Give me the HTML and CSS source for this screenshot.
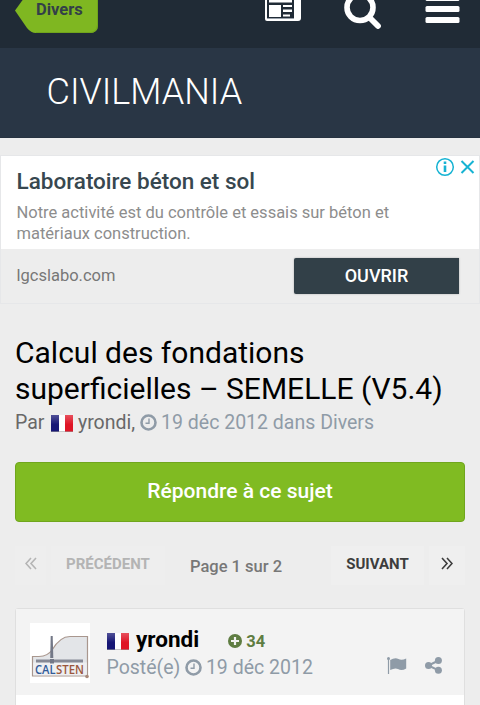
FILE: index.html
```html
<!DOCTYPE html>
<html lang="fr">

<head>
  <meta charset="UTF-8" />
  <meta name="viewport" content="width=device-width, initial-scale=1.0" />
  <title>Calcul des fondations superficielles – SEMELLE (V5.4)</title>
  <link rel="stylesheet" href="styles.css">
</head>

<body>
  <div class="topbar">
    <a class="back">
      <svg class="back-shape" width="83" height="50" viewBox="0 0 83 50">
        <path d="M0 27.500L17 4Q20 0 25 0H75Q83 0 83 8V42Q83 50 75 50H21Q16 50 12 45Z" fill="#7fb721" />
        <path d="M82.500 8V42Q82 49.500 75 49.500H21" fill="none" stroke="#71a51c" />
      </svg>
      <span>Divers</span>
    </a>
    <div class="topbar-icons">
      <svg width="36" height="38" viewBox="0 0 36 38">
        <path d="M2 4H34Q36 4 36 6V35Q36 38 33 38H2Q0 38 0 36V6Q0 4 2 4Z" fill="#fff" />
        <path d="M2 7H29V36H2Z" fill="#202b36" />
        <path d="M4 9H27V19.500H4ZM4 22H16V34H4ZM18 22H27V24H18ZM18 26.500H27V29H18ZM18 31.500H25V33.500H18Z" fill="#fff" />
        <path d="M2 35.500H29" stroke="#99a1ab" />
      </svg>
      <svg width="38" height="46" viewBox="0 0 38 46">
        <circle cx="16" cy="24.500" r="13" fill="none" stroke="#fff" stroke-width="5.600" />
        <path d="M25.500 34.500L34 43" stroke="#fff" stroke-width="5.800" stroke-linecap="round" />
      </svg>
      <svg width="35" height="40" viewBox="0 0 35 40">
        <rect x="0.500" y="12" width="34" height="6" rx="1.500" fill="#fff" />
        <rect x="0.500" y="23" width="34" height="6" rx="1.500" fill="#fff" />
        <rect x="0.500" y="34" width="34" height="6" rx="1.500" fill="#fff" />
      </svg>
    </div>
  </div>

  <div class="brand">CIVILMANIA</div>

  <div class="ad">
    <div class="ad-text">
      <h2>Laboratoire béton et sol</h2>
      <p>Notre activité est du contrôle et essais sur béton et matériaux construction.</p>
      <svg class="ad-choices" width="42" height="20" viewBox="0 0 42 20">
        <g fill="none" stroke="#16b3d3" stroke-width="1.500">
          <circle cx="10" cy="10" r="8.300" />
          <path d="M26.500 4L38.500 16M38.500 4L26.500 16" stroke-width="2" />
        </g>
        <path d="M8.700 4.500H11.300V7H8.700ZM8.700 8.500H11.300V15H8.700Z" fill="#16b3d3" />
      </svg>
    </div>
    <div class="ad-footer">
      <span>lgcslabo.com</span>
      <a class="ad-button">OUVRIR</a>
    </div>
  </div>

  <div class="content">
    <h1>Calcul des fondations superficielles – SEMELLE (V5.4)</h1>
    <div class="meta">
      <span>Par</span>
      <i class="flag"></i>
      <span class="author">yrondi,</span>
      <svg class="clock" width="17" height="17" viewBox="0 0 17 17">
        <circle cx="8.500" cy="8.500" r="7" fill="none" stroke="#8f9ba7" stroke-width="2.600" />
        <path d="M9 4.500V9.300H5.500" fill="none" stroke="#8f9ba7" stroke-width="1.400" />
      </svg>
      <span class="date">19 déc 2012 dans Divers</span>
    </div>

    <a class="reply">Répondre à ce sujet</a>

    <div class="pagination">
      <a class="page first disabled">
        <svg width="12" height="13" viewBox="0 0 12 13"><path d="M6 1L1 6.500L6 12M11 1L6 6.500L11 12" /></svg>
      </a>
      <a class="page previous disabled">PRÉCÉDENT</a>
      <span class="page-count">Page 1 sur 2</span>
      <a class="page next">SUIVANT</a>
      <a class="page last">
        <svg width="12" height="13" viewBox="0 0 12 13"><path d="M1 1L6 6.500L1 12M6 1L11 6.500L6 12" /></svg>
      </a>
    </div>

    <div class="post">
      <div class="post-header">
        <svg class="avatar" width="60" height="60" viewBox="0 0 60 60">
          <rect width="60" height="60" fill="#fff" />
          <path d="M2.500 53V33.500H9Q18 33 22 27Q30 13.500 40 13.500H57.500V53Z" fill="#e3e5e8" stroke="#a9978e" stroke-width="1.200" />
          <path d="M3.200 39.500H56.800V52.300H3.200Z" fill="#eeeff1" />
          <path d="M6 38H53" stroke="#868995" stroke-width="3" />
          <path d="M20.700 13H22.700L23.300 35H20.200Z" fill="#737887" />
          <path d="M20 36H24V40.500H20Z" fill="#737887" />
          <circle cx="57" cy="53.500" r="1.800" fill="#a9897a" />
          <text class="logo-text" x="5" y="50.500" textLength="20.500" lengthAdjust="spacingAndGlyphs" fill="#315b99">CAL</text>
          <text class="logo-text" x="26" y="50.500" textLength="28" lengthAdjust="spacingAndGlyphs" fill="#9b563d">STEN</text>
        </svg>
        <div class="post-info">
          <div class="post-author">
            <i class="flag"></i>
            <strong>yrondi</strong>
            <span class="reputation">
              <svg width="14" height="14" viewBox="0 0 14 14">
                <circle cx="7" cy="7" r="7" fill="#5f7d42" />
                <path d="M7 3V11M3 7H11" stroke="#f3f3f3" stroke-width="2.200" />
              </svg>
              34
            </span>
          </div>
          <div class="post-date">
            <span class="posted">Posté(e)</span>
            <svg class="clock" width="17" height="17" viewBox="0 0 17 17">
              <circle cx="8.500" cy="8.500" r="7" fill="none" stroke="#8f9ba7" stroke-width="2.600" />
              <path d="M9 4.500V9.300H5.500" fill="none" stroke="#8f9ba7" stroke-width="1.400" />
            </svg>
            <span class="date">19 déc 2012</span>
          </div>
        </div>
        <div class="post-tools">
          <svg width="20" height="17" viewBox="0 0 20 17">
            <circle cx="1.500" cy="1.500" r="1.500" />
            <path d="M0.900 2H2.100V17H0.900ZM3.200 3Q8 0 11.500 2Q14.500 3.800 19.200 1.500V11.500Q14.500 14.300 11 12Q8 10.500 3.200 13Z" />
          </svg>
          <svg width="17" height="17" viewBox="0 0 17 17">
            <path d="M3.500 8.500L13.500 3.500M3.500 8.500L13.500 13.300" stroke="#8f9ba7" stroke-width="2" />
            <circle cx="3.500" cy="8.500" r="3.500" />
            <circle cx="13.400" cy="3.500" r="3.500" />
            <circle cx="13.400" cy="13.300" r="3.500" />
          </svg>
        </div>
      </div>
    </div>
  </div>
</body>

</html>
```
FILE: styles.css
```css
* {
  box-sizing: border-box;
}

body {
  margin: 0;
  height: 705px;
  overflow: hidden;
  background-color: #ededed;
  font-family: Roboto, sans-serif;
  color: #000;
}

svg {
  display: block;
  flex-shrink: 0;
}

.topbar {
  display: flex;
  justify-content: space-between;
  align-items: flex-end;
  height: 48px;
  padding: 0 20px 15px 15px;
  overflow: hidden;
  background-color: #202b36;
}

.back {
  display: grid;
  color: #333f48;
  font-size: 16.5px;
  font-weight: 700;
}

.back-shape,
.back span {
  grid-area: 1 / 1;
}

.back span {
  padding: 17px 0 0 21px;
  line-height: 19px;
}

.topbar-icons {
  display: flex;
  align-items: flex-end;
  height: 40px;
}

.topbar-icons svg:nth-child(1) {
  margin: 0 43px 12px 0;
}

.topbar-icons svg:nth-child(2) {
  margin: 0 43px 4px 0;
}

.topbar-icons svg:nth-child(3) {
  margin-bottom: 10px;
}

.brand {
  height: 90px;
  padding-left: 46.5px;
  background-color: #293645;
  border-bottom: 1px solid #263240;
  color: #fff;
  font-size: 36px;
  font-weight: 300;
  line-height: 89px;
}

.ad {
  height: 149px;
  margin-top: 17px;
  border: 1px solid #e6e7e9;
}

.ad-text {
  position: relative;
  height: 93px;
  padding: 11px 70px 0 15.5px;
  background-color: #fff;
}

.ad-text h2 {
  margin: 0;
  color: #37474f;
  font-size: 22.5px;
  font-weight: 500;
  line-height: 28px;
}

.ad-text p {
  margin: 7px 0 0;
  color: #8d8d8d;
  font-size: 16.5px;
  line-height: 21px;
}

.ad-choices {
  position: absolute;
  top: 1px;
  right: 2px;
}

.ad-footer {
  display: flex;
  justify-content: space-between;
  align-items: center;
  height: 54px;
  padding: 0 20px 0 15.5px;
  color: #777;
  font-size: 16.5px;
}

.ad-footer span {
  padding-bottom: 2px;
}

.ad-button {
  width: 165px;
  height: 36px;
  background-color: #324048;
  border-radius: 2px 0 0 2px;
  box-shadow: 0 0 2px rgba(0, 0, 0, 0.3);
  color: #fff;
  font-size: 18px;
  font-weight: 500;
  line-height: 36px;
  text-align: center;
}

.content {
  padding: 31px 15px 0;
}

h1 {
  margin: 0;
  font-size: 30px;
  font-weight: 400;
  line-height: 36px;
}

.meta {
  display: flex;
  align-items: center;
  height: 30px;
  color: #686868;
  font-size: 19.5px;
}

.flag {
  width: 22px;
  height: 17px;
  margin: 3px 5px 0 6.5px;
  border-bottom: 1px solid rgba(120, 120, 120, 0.4);
  background: linear-gradient(rgba(255, 255, 255, 0.25), transparent 60%),
    linear-gradient(to right, #171775 0 36%, #fff 36% 64%, #df1526 64%);
}

.clock {
  margin: 0 4px 0 5px;
}

.date {
  color: #8f9ba7;
}

.reply {
  display: block;
  height: 60px;
  margin-top: 25px;
  background-color: #80bb22;
  border: 1px solid #70a61d;
  border-radius: 4px;
  color: #fff;
  font-size: 21px;
  font-weight: 500;
  line-height: 57px;
  text-align: center;
}

.pagination {
  display: flex;
  height: 39px;
  margin-top: 24px;
  color: #3d3d3d;
  font-size: 15px;
  font-weight: 700;
  line-height: 37px;
}

.page {
  background-color: #efefef;
  text-align: center;
}

.page svg {
  margin: 11px auto 0;
  fill: none;
  stroke: #3d3d3d;
  stroke-width: 1.6;
}

.disabled {
  background-color: #eee;
  color: #b4b4b4;
}

.disabled svg {
  stroke: #b4b4b4;
}

.first {
  width: 31px;
}

.previous {
  width: 114px;
  margin-left: 5px;
}

.page-count {
  width: 142px;
  color: #777;
  font-size: 16.5px;
  font-weight: 500;
  line-height: 41px;
  text-align: center;
}

.next {
  width: 93px;
  margin-left: 24px;
}

.last {
  width: 36px;
  margin-left: 5px;
}

.post {
  height: 110px;
  margin-top: 23px;
  background-color: #fff;
  border: 1px solid #dfdfdf;
  border-radius: 3px;
}

.post-header {
  display: flex;
  height: 86px;
  padding: 14px 22px 0 14px;
  background-color: #f3f3f3;
}

.logo-text {
  font-family: "Open Sans", sans-serif;
  font-size: 12px;
  font-weight: 600;
}

.post-info {
  margin-left: 16.5px;
}

.post-author,
.post-date {
  display: flex;
  align-items: center;
  height: 28px;
}

.post-author {
  margin-top: 2px;
  font-size: 22.5px;
}

.post-author .flag {
  margin: 4px 7px 0 0.5px;
}

.post-author strong {
  font-weight: 700;
}

.reputation {
  display: flex;
  align-items: center;
  gap: 4px;
  margin: 4px 0 0 29px;
  color: #5f7d42;
  font-size: 16.5px;
  font-weight: 700;
}

.post-date {
  color: #8f9ba7;
  font-size: 19.5px;
}

.post-date .clock {
  margin-left: 4.5px;
}

.post-tools {
  display: flex;
  gap: 18px;
  margin: 34px 0 0 auto;
  fill: #8f9ba7;
}
```
